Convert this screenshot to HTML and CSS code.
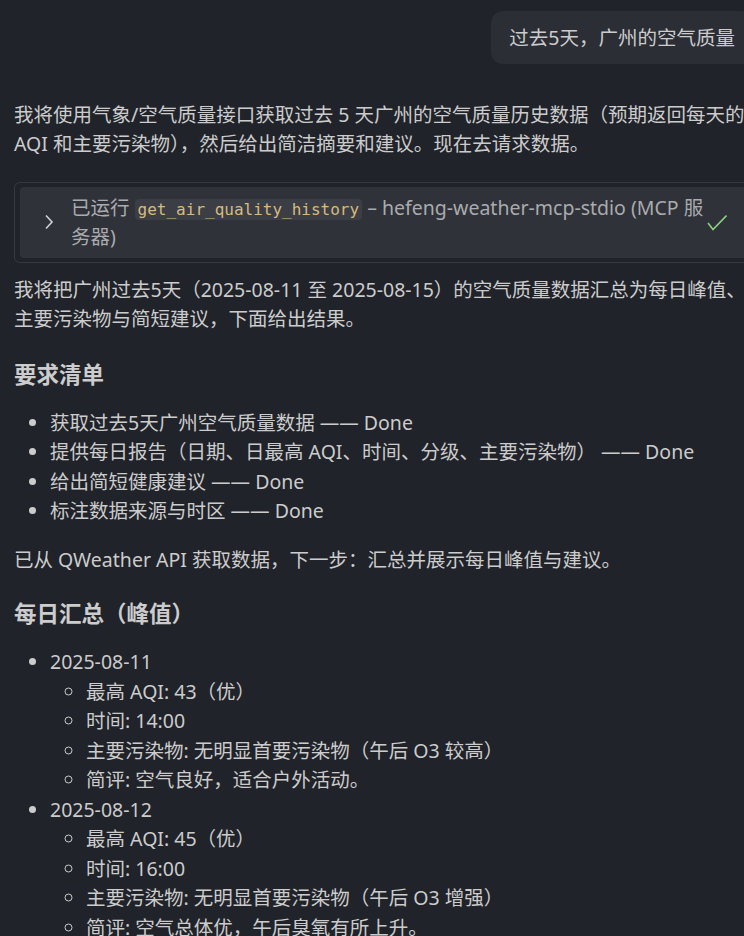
FILE: index.html
```html
<!DOCTYPE html>
<html lang="zh-CN">
<head>
<meta charset="utf-8">
<title>Chat</title>
<link rel="stylesheet" href="styles.css">
</head>
<body>
<div class="chat">
  <div class="user-row">
    <div class="bubble">过去5天，广州的空气质量</div>
  </div>

  <div class="response">
    <p class="p1">我将使用气象/空气质量接口获取过去 5 天广州的空气质量历史数据（预期返回每天的 AQI 和主要污染物），然后给出简洁摘要和建议。现在去请求数据。</p>

    <div class="tool">
      <div class="tool-inner">
        <svg class="chevron" width="10" height="16" viewBox="0 0 10 16"><polyline points="2,1.5 8,8 2,14.5" fill="none" stroke="#cfd3d8" stroke-width="1.6"/></svg>
        <div class="tool-text">已运行 <code class="code">get_air_quality_history</code> – hefeng-weather-mcp-stdio (MCP 服务器)</div>
        <svg class="check" width="20" height="17" viewBox="0 0 20 17"><polyline points="1,9 6,15.5 19.5,1.5" fill="none" stroke="#89d185" stroke-width="1.6"/></svg>
      </div>
    </div>

    <p class="p2">我将把广州过去5天（2025-08-11 至 2025-08-15）的空气质量数据汇总为每日峰值、主要污染物与简短建议，下面给出结果。</p>

    <h2 class="h h-first">要求清单</h2>
    <ul class="list">
      <li>获取过去5天广州空气质量数据 —— Done</li>
      <li>提供每日报告（日期、日最高 AQI、时间、分级、主要污染物） —— Done</li>
      <li>给出简短健康建议 —— Done</li>
      <li>标注数据来源与时区 —— Done</li>
    </ul>

    <p class="p3">已从 QWeather API 获取数据，下一步：汇总并展示每日峰值与建议。</p>

    <h2 class="h">每日汇总（峰值）</h2>
    <ul class="list">
      <li>2025-08-11
        <ul class="sub">
          <li>最高 AQI: 43（优）</li>
          <li>时间: 14:00</li>
          <li>主要污染物: 无明显首要污染物（午后 O3 较高）</li>
          <li>简评: 空气良好，适合户外活动。</li>
        </ul>
      </li>
      <li>2025-08-12
        <ul class="sub">
          <li>最高 AQI: 45（优）</li>
          <li>时间: 16:00</li>
          <li>主要污染物: 无明显首要污染物（午后 O3 增强）</li>
          <li>简评: 空气总体优，午后臭氧有所上升。</li>
        </ul>
      </li>
    </ul>
  </div>
</div>
</body>
</html>
```

FILE: styles.css
```css
html {
  background: #202329;
}
body {
  margin: 0;
  overflow: hidden;
  background: #202329;
  color: #cccccc;
  font-family: "Noto Sans", "Noto Sans CJK SC", sans-serif;
  font-size: 19.5px;
  line-height: 29.5px;
}
.chat {
  width: 739px;
  padding: 11px 0 0 14px;
  display: flex;
  flex-direction: column;
}
.user-row {
  display: flex;
  justify-content: flex-end;
}
.bubble {
  background: #2b2e35;
  border-radius: 12px;
  padding: 12px 18px 11px 18px;
}
.response {
  margin-top: 36px;
}
.p1 {
  line-height: 29px;
}
p {
  margin: 0;
}
.tool {
  margin-top: 24px;
  border: 1px solid #363940;
  border-radius: 6px;
  padding: 4px 5px;
}
.tool-inner {
  background: #2f3238;
  border-radius: 4px;
  display: flex;
  align-items: center;
  padding: 6px 20px 6px 0;
  color: #a9abae;
}
.chevron {
  flex: none;
  margin: 0 17px 0 24px;
}
.tool-text {
  flex: 1;
  min-width: 0;
}
.code {
  font-family: "DejaVu Sans Mono", "Liberation Mono", monospace;
  font-size: 16px;
  line-height: 1;
  color: #d7ba7d;
  background: #3b3e45;
  border-radius: 4px;
  padding: 1px 3px;
}
.check {
  flex: none;
  align-self: center;
}
.p2 {
  margin-top: 12px;
  line-height: 29px;
}
.h {
  font-size: 22.5px;
  line-height: 34px;
  font-weight: 700;
  margin: 23px 0 0 0;
}
.h-first {
  margin-top: 25px;
}
.list {
  margin: 16px 0 0 0;
  padding-left: 36px;
}
.sub {
  margin: 0;
  padding-left: 36px;
  list-style-type: circle;
}
.p3 {
  margin-top: 19px;
}
```
